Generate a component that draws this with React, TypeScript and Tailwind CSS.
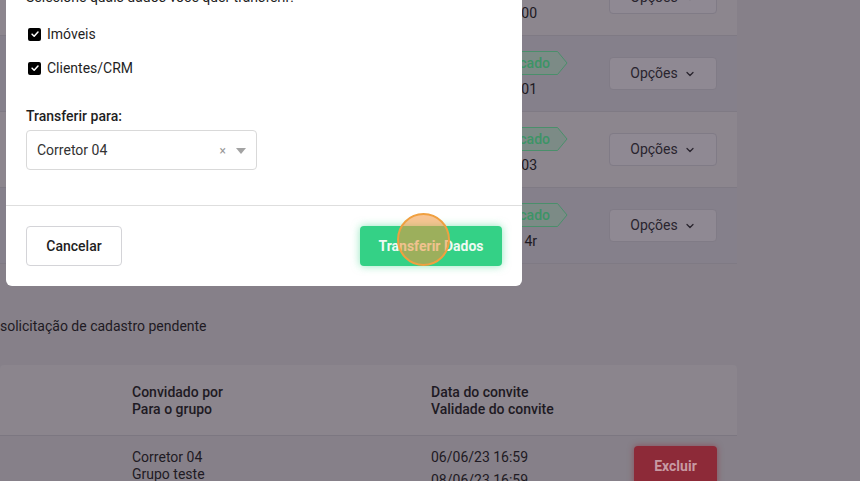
import React from "react";
import { ChevronDown } from "lucide-react";

const rows = [
  { code: "CRECI 00", light: true },
  { code: "CRECI 01", light: false },
  { code: "CRECI 03", light: true },
  { code: "CRECI 4r", light: false },
];

const Check: React.FC = () => (
  <span className="flex h-[13px] w-[13px] items-center justify-center rounded-[2px] bg-black">
    <svg viewBox="0 0 12 12" className="h-[10px] w-[10px]">
      <path d="M2.5 6.2 L5 8.6 L9.6 3.6" fill="none" stroke="white" strokeWidth="1.8" strokeLinecap="round" strokeLinejoin="round" />
    </svg>
  </span>
);

// tag shaped badge with a pointed right end
const Badge: React.FC = () => (
  <div className="relative flex h-[24px] w-[98px] items-center justify-end pr-[18px] text-[14px] font-medium text-[#3c9466]">
    <svg viewBox="0 0 98 24" className="absolute inset-0 h-full w-full">
      <path d="M3.5 0.5 H87.5 L97 12 L87.5 23.5 H3.5 Q0.5 23.5 0.5 20.5 V3.5 Q0.5 0.5 3.5 0.5 Z" fill="#7c8b86" stroke="#4a8f6b" strokeWidth="1" />
    </svg>
    <span className="relative">Verificado</span>
  </div>
);

const App: React.FC = () => {
  return (
    <div className="relative h-[481px] w-[860px] overflow-hidden bg-[#868089] font-['Roboto',sans-serif] text-[14px] text-[#1e1a23]">
      {/* page behind the overlay */}
      <div className="-mt-[40px] w-[737px]">
        {rows.map((r, i) => (
          <div
            key={i}
            className={`flex h-[76px] items-center border-b border-[#7f7a84] ${r.light ? "bg-[#8c868e]" : "bg-[#85808b]"}`}
          >
            <div className="ml-[470px] flex w-[139px] flex-col gap-[5px] pt-[2px]">
              <Badge />
              <span className="block w-[67px] text-right leading-[18px]">{r.code}</span>
            </div>
            <button className="flex h-[33px] w-[108px] items-center justify-center gap-[6px] rounded-[4px] border border-[#807b86] bg-[#8f8993] text-[14px] text-[#29242e]">
              Opções
              <ChevronDown size={12} strokeWidth={2.5} />
            </button>
          </div>
        ))}
      </div>

      <p className="mt-[52px] leading-[20px]">solicitação de cadastro pendente</p>

      <div className="mt-[29px] w-[737px]">
        <div className="flex h-[71px] items-center rounded-t-[4px] border-b border-[#7c7781] bg-[#8b858d] pt-[2px] font-medium leading-[17px]">
          <div className="ml-[132px] w-[299px]">
            <div>Convidado por</div>
            <div>Para o grupo</div>
          </div>
          <div>
            <div>Data do convite</div>
            <div>Validade do convite</div>
          </div>
        </div>
        <div className="flex pt-[10px]">
          <div className="ml-[132px] w-[299px] pt-[3px] leading-[17px]">
            <div>Corretor 04</div>
            <div>Grupo teste</div>
          </div>
          <div className="w-[203px] leading-[23px]">
            <div>06/06/23 16:59</div>
            <div>08/06/23 16:59</div>
          </div>
          <button className="h-[40px] w-[83px] rounded-[4px] bg-[#8d2a38] text-[14px] font-bold text-[#c79aa3] shadow-[0_0_6px_rgba(141,42,56,0.6)]">
            Excluir
          </button>
        </div>
      </div>

      {/* modal */}
      <div className="absolute bottom-[195px] left-[6px] flex w-[516px] flex-col rounded-[6px] bg-white text-[#1f1f1f]">
        <div className="px-[20px] pb-[35px]">
          <p className="leading-[20px]">Selecione quais dados você quer transferir:</p>
          <label className="mt-[17px] flex h-[20px] items-center gap-[6px] pl-[2px]">
            <Check />
            Imóveis
          </label>
          <label className="mt-[14px] flex h-[20px] items-center gap-[6px] pl-[2px]">
            <Check />
            Clientes/CRM
          </label>
          <p className="mt-[28px] font-medium leading-[20px]">Transferir para:</p>
          <div className="mt-[4px] flex h-[40px] w-[231px] items-center rounded-[4px] border border-[#d9d9d9] pl-[10px] pr-[10px] pt-[1px] text-[#333]">
            <span className="flex-1">Corretor 04</span>
            <span className="mr-[10px] text-[12px] text-[#999]">×</span>
            <svg viewBox="0 0 10 6" className="h-[6px] w-[10px]">
              <path d="M0 0 L10 0 L5 6 Z" fill="#a3a3a3" />
            </svg>
          </div>
        </div>
        <div className="flex h-[81px] items-center justify-between border-t border-[#dedede] px-[20px]">
          <button className="h-[40px] w-[96px] rounded-[4px] border border-[#d4d4d8] bg-white font-medium text-[#1f1f1f]">
            Cancelar
          </button>
          <button className="h-[40px] w-[142px] rounded-[4px] bg-[#34d186] font-bold text-[#eefaf3] shadow-[0_0_8px_rgba(52,209,134,0.55)]">
            Transferir Dados
          </button>
        </div>
      </div>

      {/* click highlight */}
      <div className="absolute left-[397px] top-[213px] h-[53px] w-[53px] rounded-full border-2 border-[#f0a040] bg-[#f2933a]/55" />
    </div>
  );
};

export default App;
